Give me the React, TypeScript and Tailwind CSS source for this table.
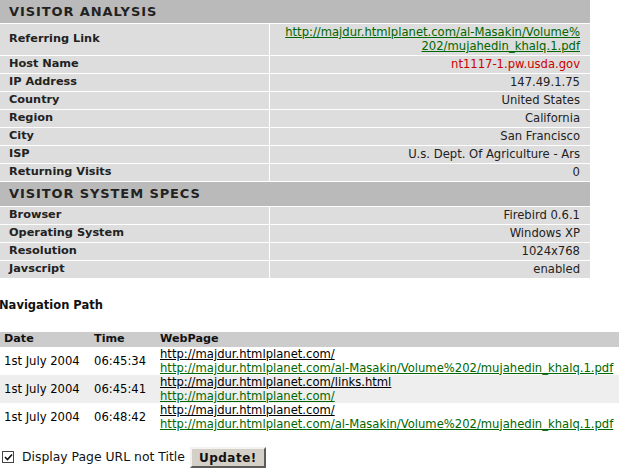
import React from 'react';

const font = { fontFamily: '"DejaVu Sans", Verdana, sans-serif' };

const analysis: [string, React.ReactNode][] = [
  ['Host Name', <span className="text-[#cc0000]">nt1117-1.pw.usda.gov</span>],
  ['IP Address', '147.49.1.75'],
  ['Country', 'United States'],
  ['Region', 'California'],
  ['City', 'San Francisco'],
  ['ISP', 'U.s. Dept. Of Agriculture - Ars'],
  ['Returning Visits', '0'],
];

const specs: [string, string][] = [
  ['Browser', 'Firebird 0.6.1'],
  ['Operating System', 'Windows XP'],
  ['Resolution', '1024x768'],
  ['Javscript', 'enabled'],
];

const visits = [
  {
    date: '1st July 2004',
    time: '06:45:34',
    page: 'http://majdur.htmlplanet.com/',
    ref: 'http://majdur.htmlplanet.com/al-Masakin/Volume%202/mujahedin_khalq.1.pdf',
  },
  {
    date: '1st July 2004',
    time: '06:45:41',
    page: 'http://majdur.htmlplanet.com/links.html',
    ref: 'http://majdur.htmlplanet.com/',
  },
  {
    date: '1st July 2004',
    time: '06:48:42',
    page: 'http://majdur.htmlplanet.com/',
    ref: 'http://majdur.htmlplanet.com/al-Masakin/Volume%202/mujahedin_khalq.1.pdf',
  },
];

function SectionHeader({ title, tall }: { title: string; tall?: boolean }) {
  return (
    <tr>
      <td
        colSpan={2}
        className={`bg-[#bababa] pl-[9px] text-[13px] font-bold tracking-[0.9px] text-[#222] border-b border-white ${tall ? 'h-[25px]' : 'h-[23px]'}`}
      >
        {title}
      </td>
    </tr>
  );
}

function Row({ label, value, tall }: { label: string; value: React.ReactNode; tall?: boolean }) {
  return (
    <tr className="bg-[#dddddd]">
      <td
        className={`w-[269px] border-r border-b border-white pl-[9px] text-[11.3px] font-bold text-[#222] ${tall ? 'h-[32px]' : 'h-[18px]'}`}
      >
        {label}
      </td>
      <td className="border-b border-white pr-[10px] text-right text-[#222] leading-[14px]">{value}</td>
    </tr>
  );
}

export default function App() {
  return (
    <div className="w-[619px] h-[470px] bg-white text-[11.6px] text-black overflow-hidden" style={font}>
      <table className="w-[590px] border-collapse">
        <tbody>
          <SectionHeader title="VISITOR ANALYSIS" />
          <Row
            tall
            label="Referring Link"
            value={
              <a href="#" className="text-[#006600] underline align-top">
                http://majdur.htmlplanet.com/al-Masakin/Volume%
                <br />
                202/mujahedin_khalq.1.pdf
              </a>
            }
          />
          {analysis.map(([l, v]) => (
            <Row key={l} label={l} value={v} />
          ))}
          <SectionHeader tall title="VISITOR SYSTEM SPECS" />
          {specs.map(([l, v]) => (
            <Row key={l} label={l} value={v} />
          ))}
        </tbody>
      </table>

      <div className="mt-[18px] -ml-[1px] text-[11.5px] font-bold text-[#111]">Navigation Path</div>

      <table className="mt-[18px] w-full border-collapse">
        <thead>
          <tr className="bg-[#cccccc] text-left text-[11.2px] font-bold text-[#111]">
            <th className="h-[15px] w-[94px] pl-[4px] leading-[14px]">Date</th>
            <th className="w-[66px] leading-[14px]">Time</th>
            <th className="leading-[14px]">WebPage</th>
          </tr>
        </thead>
        <tbody>
          {visits.map((v, i) => (
            <tr key={i} className={i % 2 === 1 ? 'bg-[#eeeeee]' : 'bg-white'}>
              <td className="h-[28px] pl-[4px] leading-[14px]">{v.date}</td>
              <td className="leading-[14px]">{v.time}</td>
              <td className="leading-[14px] whitespace-nowrap">
                <a href="#" className="block text-black underline">
                  {v.page}
                </a>
                <a href="#" className="block text-[#006600] underline">
                  {v.ref}
                </a>
              </td>
            </tr>
          ))}
        </tbody>
      </table>

      <div className="mt-[16px] flex items-center pl-[2px] text-[12.4px] text-[#111]">
        <span className="flex h-[12px] w-[12px] items-center justify-center border border-[#444] bg-white">
          <svg width="9" height="9" viewBox="0 0 9 9">
            <path d="M1 4 L3.5 6.5 L8 1.5" fill="none" stroke="#111" strokeWidth="1.6" />
          </svg>
        </span>
        <span className="ml-[8px]">Display Page URL not Title</span>
        <button
          type="button"
          className="ml-[5px] h-[21px] w-[76px] border-2 border-t-[#f4f2ee] border-l-[#f4f2ee] border-r-[#5e5c58] border-b-[#5e5c58] bg-[#d4d0c8] text-[12px] font-bold tracking-[0.5px] text-[#111]"
          style={font}
        >
          Update!
        </button>
      </div>
    </div>
  );
}
